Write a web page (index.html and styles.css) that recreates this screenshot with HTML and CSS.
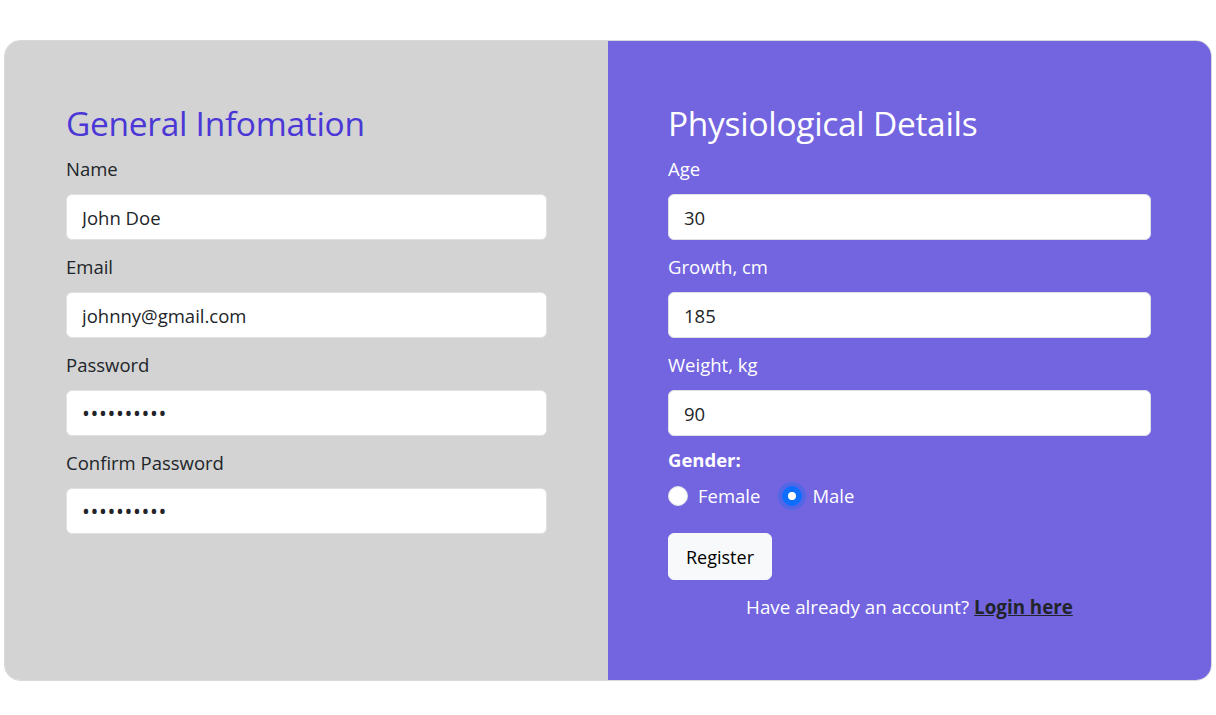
FILE: index.html
```html
<!DOCTYPE html>
<html lang="en">
<head>
<meta charset="utf-8">
<title>Register</title>
<link rel="stylesheet" href="styles.css">
</head>
<body>
<div class="page">
  <form class="card">
    <section class="col col-general">
      <h2 class="title title-general">General Infomation</h2>
      <div class="group">
        <label class="label" for="name">Name</label>
        <input class="field" id="name" type="text" value="John Doe">
      </div>
      <div class="group">
        <label class="label" for="email">Email</label>
        <input class="field" id="email" type="email" value="johnny@gmail.com">
      </div>
      <div class="group">
        <label class="label" for="pw">Password</label>
        <input class="field field-pw" id="pw" type="password" value="1234567890">
      </div>
      <div class="group">
        <label class="label" for="pw2">Confirm Password</label>
        <input class="field field-pw" id="pw2" type="password" value="1234567890">
      </div>
    </section>
    <section class="col col-phys">
      <h2 class="title title-phys">Physiological Details</h2>
      <div class="group">
        <label class="label" for="age">Age</label>
        <input class="field" id="age" type="text" value="30">
      </div>
      <div class="group">
        <label class="label" for="growth">Growth, cm</label>
        <input class="field" id="growth" type="text" value="185">
      </div>
      <div class="group">
        <label class="label" for="weight">Weight, kg</label>
        <input class="field" id="weight" type="text" value="90">
      </div>
      <div class="gender-label">Gender:</div>
      <div class="radios">
        <label class="radio"><span class="dot"></span>Female</label>
        <label class="radio"><span class="dot dot-on"></span>Male</label>
      </div>
      <div class="actions">
        <button type="button" class="btn">Register</button>
      </div>
      <p class="login">Have already an account? <a href="#" class="login-link">Login here</a></p>
    </section>
  </form>
</div>
</body>
</html>
```

FILE: styles.css
```css
* { box-sizing: border-box; }
html, body { margin: 0; padding: 0; background: #fff; }
body {
  font-family: "Open Sans", "Noto Sans", sans-serif;
  color: #212529;
}
.page {
  padding: 40px 4px 34px 4px;
}
.card {
  display: grid;
  grid-template-columns: 1fr 1fr;
  border: 1px solid #d9d9d9;
  border-radius: 16px;
  overflow: hidden;
  height: 641px;
}
.col {
  padding: 61px 60px 0 60px;
  display: flex;
  flex-direction: column;
}
.col-general { background: #d3d3d3; padding-left: 61px; padding-right: 61px; }
.col-phys { background: #7364e0; color: #fff; }
.title {
  margin: 0 0 13px 0;
  font-weight: 400;
  font-size: 33.5px;
  line-height: 42px;
  letter-spacing: -0.3px;
}
.title-general { color: #4b37d6; }
.title-phys { color: #fff; }
.group { display: flex; flex-direction: column; margin-bottom: 15px; }
.label {
  font-size: 18.5px;
  line-height: 24px;
  margin-bottom: 13px;
}
.field {
  height: 46px;
  border: 1px solid #dee2e6;
  border-radius: 6px;
  background: #fff;
  padding: 0 15px;
  font-family: inherit;
  font-size: 18.5px;
  color: #212529;
  outline: none;
}
.field-pw {
  letter-spacing: 0.6px;
  font-size: 21px;
}
.col-phys .group:nth-of-type(3) { margin-bottom: 12px; }
.gender-label {
  font-weight: 700;
  font-size: 18.5px;
  line-height: 24px;
  margin-bottom: 12px;
}
.radios {
  display: flex;
  align-items: center;
  gap: 22px;
  height: 24px;
  margin-bottom: 25px;
}
.radio {
  display: flex;
  align-items: center;
  gap: 10px;
  font-size: 18.5px;
  line-height: 24px;
}
.dot {
  width: 20px;
  height: 20px;
  border-radius: 50%;
  background: #fff;
  border: 1px solid #dee2e6;
  position: relative;
}
.dot-on {
  background: #0d6efd;
  border-color: #0d6efd;
  box-shadow: 0 0 0 4px rgba(13, 110, 253, 0.3);
}
.dot-on::after {
  content: "";
  position: absolute;
  left: 50%;
  top: 50%;
  width: 8px;
  height: 8px;
  margin: -4px 0 0 -4px;
  border-radius: 50%;
  background: #fff;
}
.actions { display: flex; }
.btn {
  height: 47px;
  width: 104px;
  border: 1px solid #f8f9fa;
  background: #f8f9fa;
  border-radius: 6px;
  font-family: inherit;
  font-size: 18px;
  color: #000;
  padding: 0;
}
.login {
  margin: 15px 0 0 0;
  text-align: center;
  font-size: 18.8px;
  line-height: 24px;
}
.login-link {
  color: #212529;
  font-weight: 700;
}
```
